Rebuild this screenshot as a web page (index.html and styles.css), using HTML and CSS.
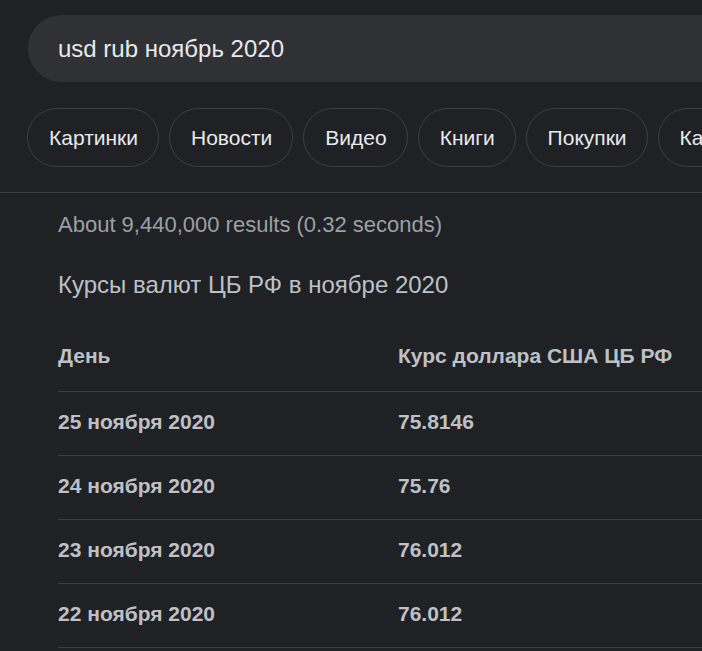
FILE: index.html
```html
<!DOCTYPE html>
<html lang="ru">
<head>
<meta charset="utf-8">
<link rel="stylesheet" href="styles.css">
</head>
<body>
<div class="page">
  <div class="search">
    <span class="query">usd rub ноябрь 2020</span>
  </div>
  <div class="chips">
    <span class="chip">Картинки</span>
    <span class="chip">Новости</span>
    <span class="chip">Видео</span>
    <span class="chip">Книги</span>
    <span class="chip">Покупки</span>
    <span class="chip">Карты</span>
  </div>
  <div class="divider"></div>
  <div class="results">
    <div class="stats">About 9,440,000 results (0.32 seconds)</div>
    <div class="title">Курсы валют ЦБ РФ в ноябре 2020</div>
    <div class="table">
      <div class="row head"><span class="c1">День</span><span class="c2">Курс доллара США ЦБ РФ</span></div>
      <div class="row"><span class="c1">25 ноября 2020</span><span class="c2">75.8146</span></div>
      <div class="row"><span class="c1">24 ноября 2020</span><span class="c2">75.76</span></div>
      <div class="row"><span class="c1">23 ноября 2020</span><span class="c2">76.012</span></div>
      <div class="row"><span class="c1">22 ноября 2020</span><span class="c2">76.012</span></div>
    </div>
  </div>
</div>
</body>
</html>
```
FILE: styles.css
```css
html, body {
  margin: 0;
  padding: 0;
  background: #202124;
  overflow: hidden;
}
.page {
  width: 702px;
  height: 651px;
  overflow: hidden;
  font-family: "Liberation Sans", Arial, sans-serif;
  color: #e8eaed;
}
.search {
  margin: 15px 0 0 28px;
  width: 760px;
  height: 67px;
  border-radius: 34px;
  background: #303134;
  display: flex;
  align-items: center;
  padding-left: 30px;
  box-sizing: border-box;
}
.query {
  font-size: 24px;
  color: #e8eaed;
}
.chips {
  display: flex;
  gap: 10px;
  margin: 26px 0 0 27px;
  white-space: nowrap;
}
.chip {
  flex: none;
  height: 59px;
  box-sizing: border-box;
  border: 1px solid #3c4043;
  border-radius: 30px;
  padding: 0 20px 0 21px;
  display: flex;
  align-items: center;
  font-size: 21px;
  color: #e8eaed;
}
.divider {
  margin-top: 25px;
  height: 1px;
  background: #3c4043;
}
.results {
  padding-left: 58px;
}
.stats {
  margin-top: 20px;
  font-size: 22px;
  line-height: 24px;
  color: #9aa0a6;
}
.title {
  margin-top: 34px;
  font-size: 24px;
  line-height: 28px;
  color: #bdc1c6;
}
.table {
  margin-top: 25px;
}
.row {
  display: flex;
  height: 64px;
  align-items: center;
  border-bottom: 1px solid #3c4043;
  box-sizing: border-box;
  padding-bottom: 4px;
  font-size: 21px;
  font-weight: bold;
  color: #bdc1c6;
}
.row.head {
  height: 68px;
  padding-bottom: 3px;
}
.c1 {
  width: 340px;
}
```
